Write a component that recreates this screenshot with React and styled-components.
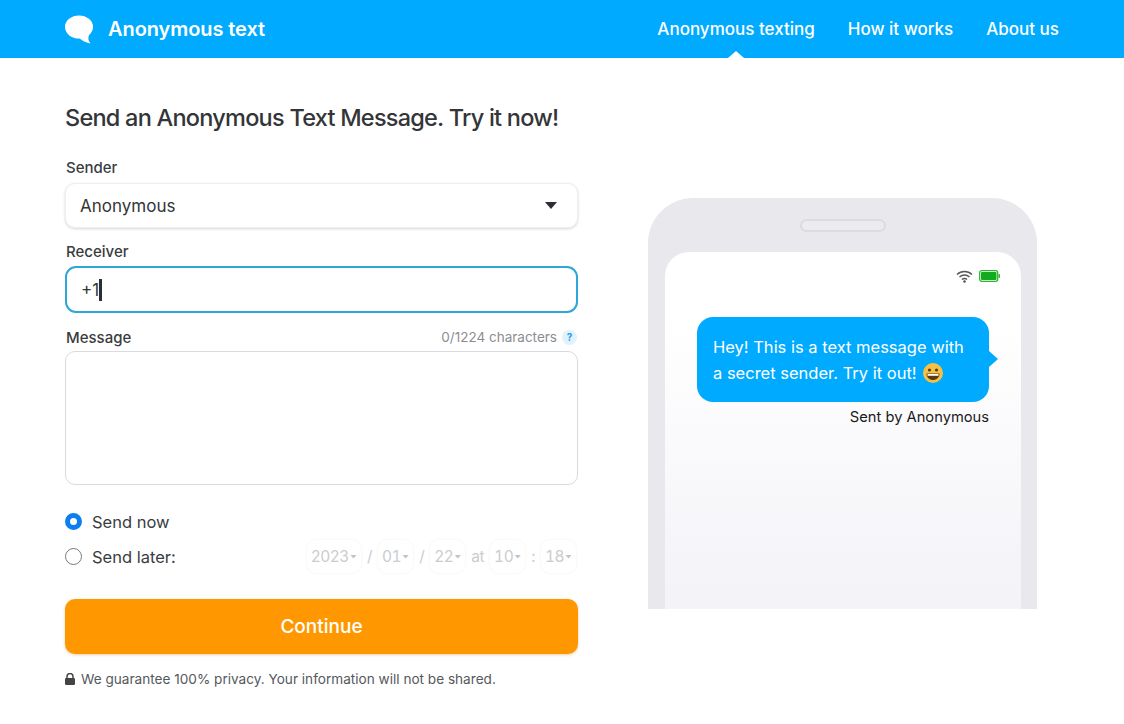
import React from 'react'
import styled, { createGlobalStyle } from 'styled-components'

const GlobalStyle = createGlobalStyle`
  html, body { margin: 0; padding: 0; background: #fff; }
  body { font-family: Inter, "Liberation Sans", sans-serif; color: #333538; height: 724px; overflow: hidden; }
`;
const Header = styled.header`
  height: 58px;
  background: #00aaff;
  display: flex;
  align-items: center;
  justify-content: space-between;
  padding: 0 65px;
`;
const Brand = styled.div`
  display: flex;
  align-items: center;
  gap: 14px;
  color: #fff;
  font-size: 20px;
  font-weight: 600;
  letter-spacing: -0.08px;
`;
const Nav = styled.nav`
  display: flex;
  gap: 33px;
`;
const NavLink = styled.a`
  position: relative;
  height: 58px;
  line-height: 58px;
  color: #fff;
  font-size: 17px;
  font-weight: 500;
  ${props => props.$active && `
    &:after {
      content: "";
      position: absolute;
      left: 50%;
      bottom: 0;
      margin-left: -8px;
      border-left: 8px solid transparent;
      border-right: 8px solid transparent;
      border-bottom: 7px solid #fff;
    }
  `}
`;
const Main = styled.main`
  display: flex;
  padding: 0 65px;
  gap: 70px;
`;
const FormCol = styled.div`
  width: 513px;
  padding-top: 45px;
`;
const Title = styled.h1`
  margin: 0 0 25px;
  font-size: 23.5px;
  line-height: 30px;
  font-weight: 500;
  letter-spacing: -0.76px;
  white-space: nowrap;
  color: #333538;
`;
const LabelRow = styled.div`
  display: flex;
  align-items: center;
  justify-content: space-between;
  height: 18px;
  padding: 0 1px;
  margin-bottom: ${props => props.$mb}px;
`;
const Label = styled.label`
  font-size: 15px;
  font-weight: 500;
  color: #3a3c40;
`;
const Counter = styled.div`
  display: flex;
  align-items: center;
  gap: 5px;
  font-size: 13.5px;
  color: #8a8d92;
`;
const Help = styled.span`
  width: 15px;
  height: 15px;
  border-radius: 50%;
  background: #dff2fd;
  color: #2f9be0;
  font-size: 10px;
  font-weight: 700;
  display: flex;
  align-items: center;
  justify-content: center;
`;
const Field = styled.div`
  box-sizing: border-box;
  height: ${props => props.$h}px;
  margin-bottom: ${props => props.$mb}px;
  display: flex;
  align-items: center;
  justify-content: space-between;
  padding: 0 20px 0 14px;
  background: #fff;
  border: 1px solid #eeeff0;
  border-radius: 10px;
  font-size: 17px;
  color: #333538;
  ${props => props.$raised && 'box-shadow: 0 1px 3px rgba(0,0,0,0.16);'}
  ${props => props.$focus && 'border: 2px solid #2ea6d8; padding-left: 14px; border-radius: 11px;'}
  ${props => props.$area && 'border-color: #d9dadd;'}
`;
const Caret = styled.span`
  display: inline-block;
  width: 3px;
  height: 22px;
  background: #2c2e33;
  vertical-align: middle;
`;
const InputText = styled.div`
  display: flex;
  align-items: center;
`;
const Arrow = styled.span`
  width: ${props => props.$w}px;
  height: ${props => props.$h}px;
  background: ${props => props.$c};
  clip-path: polygon(0 0, 100% 0, 50% 100%);
`;
const RadioRow = styled.div`
  display: flex;
  align-items: center;
  height: 35px;
`;
const Radio = styled.span`
  box-sizing: border-box;
  width: 17px;
  height: 17px;
  border-radius: 50%;
  margin-right: 10px;
  background: #fff;
  border: ${props => props.$on ? '5px solid #0d7df2' : '1.5px solid #77797d'};
`;
const RadioText = styled.span`
  font-size: 16.5px;
  color: #3a3c40;
`;
const DateRow = styled.div`
  margin-left: auto;
  display: flex;
  align-items: center;
  gap: 5px;
  padding-right: 1px;
  font-size: 15.5px;
  letter-spacing: -0.5px;
  font-feature-settings: "tnum";
  color: #cbccce;
`;
const DateBox = styled.span`
  box-sizing: border-box;
  height: 35px;
  padding: 0 4px;
  display: flex;
  align-items: center;
  gap: 1px;
  border-radius: 10px;
  border: 1px solid #fafafa;
  box-shadow: 0 0 2px rgba(0,0,0,0.03);
`;
const Continue = styled.button`
  display: block;
  width: 100%;
  height: 55px;
  margin-top: 25px;
  border: none;
  border-radius: 10px;
  background: #ff9800;
  box-shadow: 0 1px 3px rgba(200,120,0,0.35);
  color: #fff;
  font-family: inherit;
  font-size: 19px;
  font-weight: 500;
`;
const Privacy = styled.div`
  display: flex;
  align-items: center;
  gap: 6px;
  margin-top: 17px;
  font-size: 13.6px;
  color: #55585c;
`;
const PhoneCol = styled.div`
  padding-top: 140px;
`;
const Phone = styled.div`
  box-sizing: border-box;
  width: 389px;
  height: 411px;
  background: #e9e9ed;
  border-radius: 45px 45px 0 0;
  padding: 0 16px 0 17px;
  display: flex;
  flex-direction: column;
`;
const SpeakerWrap = styled.div`
  height: 54px;
  display: flex;
  justify-content: center;
  padding-top: 21px;
  box-sizing: border-box;
`;
const Speaker = styled.div`
  box-sizing: border-box;
  width: 86px;
  height: 13px;
  border: 2px solid #dbdbe0;
  border-radius: 7px;
  background: #ececf0;
`;
const Screen = styled.div`
  flex: 1;
  background: linear-gradient(#ffffff 18%, #f3f3f8 100%);
  border-radius: 24px 24px 0 0;
  padding: 0 21px 0 32px;
`;
const StatusBar = styled.div`
  height: 65px;
  padding-top: 17px;
  box-sizing: border-box;
  display: flex;
  justify-content: flex-end;
  align-items: flex-start;
  gap: 6px;
`;
const MessageWrap = styled.div`
  width: 292px;
`;
const Bubble = styled.div`
  position: relative;
  box-sizing: border-box;
  height: 85px;
  padding: 17px 16px;
  background: #00aaff;
  border-radius: 16px;
  color: #fff;
  font-size: 16.5px;
  line-height: 26px;
  white-space: nowrap;
  &:after {
    content: "";
    position: absolute;
    right: -9px;
    top: 34px;
    border-top: 8px solid transparent;
    border-bottom: 8px solid transparent;
    border-left: 9px solid #00aaff;
  }
`;
const Emoji = styled.svg`
  vertical-align: -4px;
  margin-left: 2px;
`;
const SentBy = styled.div`
  margin-top: 6px;
  text-align: right;
  font-size: 14.7px;
  color: #1a1a1a;
`;

const dateParts = [
  { type: 'box', value: '2023' },
  { type: 'sep', value: '/' },
  { type: 'box', value: '01' },
  { type: 'sep', value: '/' },
  { type: 'box', value: '22' },
  { type: 'sep', value: 'at' },
  { type: 'box', value: '10' },
  { type: 'sep', value: ':' },
  { type: 'box', value: '18' },
];

const App = () => {
  return (
    <>
      <GlobalStyle />
      <Header>
        <Brand>
          <svg width="29" height="30" viewBox="0 0 29 30">
            <ellipse cx="14" cy="13" rx="14" ry="11.500" fill="#fff" />
            <path d="M13 23 Q18 28 25.500 29.500 Q21.500 26 25 18 Z" fill="#fff" />
          </svg>
          Anonymous text
        </Brand>
        <Nav>
          <NavLink $active>Anonymous texting</NavLink>
          <NavLink>How it works</NavLink>
          <NavLink>About us</NavLink>
        </Nav>
      </Header>
      <Main>
        <FormCol>
          <Title>Send an Anonymous Text Message. Try it now!</Title>
          <LabelRow $mb={7}><Label>Sender</Label></LabelRow>
          <Field $h={45} $mb={14} $raised>
            Anonymous
            <Arrow $w={12} $h={7} $c="#2c2e33" />
          </Field>
          <LabelRow $mb={6}><Label>Receiver</Label></LabelRow>
          <Field $h={47} $mb={15} $focus>
            <InputText>+1<Caret /></InputText>
          </Field>
          <LabelRow $mb={5}>
            <Label>Message</Label>
            <Counter>0/1224 characters <Help>?</Help></Counter>
          </LabelRow>
          <Field $h={134} $mb={19} $area />
          <RadioRow>
            <Radio $on />
            <RadioText>Send now</RadioText>
          </RadioRow>
          <RadioRow>
            <Radio />
            <RadioText>Send later:</RadioText>
            <DateRow>
              {dateParts.map((part, i) => part.type === 'box'
                ? <DateBox key={i}>{part.value}<Arrow $w={7} $h={4} $c="#c2c3c5" /></DateBox>
                : <span key={i}>{part.value}</span>)}
            </DateRow>
          </RadioRow>
          <Continue>Continue</Continue>
          <Privacy>
            <svg width="10" height="12" viewBox="0 0 10 12">
              <path d="M2 5V3.500a3 3 0 0 1 6 0V5" fill="none" stroke="#444" strokeWidth="1.500" />
              <rect x="0" y="5" width="10" height="7" rx="1.200" fill="#444" />
            </svg>
            We guarantee 100% privacy. Your information will not be shared.
          </Privacy>
        </FormCol>
        <PhoneCol>
          <Phone>
            <SpeakerWrap><Speaker /></SpeakerWrap>
            <Screen>
              <StatusBar>
                <svg width="17" height="14" viewBox="0 0 17 14">
                  <path d="M1 5.500a11 11 0 0 1 15 0M3.500 8a7.500 7.500 0 0 1 10 0M6 10.500a3.500 3.500 0 0 1 5 0" fill="none" stroke="#55575b" strokeWidth="1.500" />
                  <circle cx="8.500" cy="12.500" r="1.300" fill="#55575b" />
                </svg>
                <svg width="21" height="12" viewBox="0 0 21 12" style={{ marginTop: 1 }}>
                  <rect x="0.700" y="0.700" width="18" height="10.600" rx="2" fill="none" stroke="#2fb52f" strokeWidth="1.300" />
                  <rect x="2" y="2" width="15.500" height="8" rx="1" fill="#12ab1f" />
                  <rect x="19.500" y="4" width="1.500" height="4" rx="0.700" fill="#2fb52f" />
                </svg>
              </StatusBar>
              <MessageWrap>
                <Bubble>
                  Hey! This is a text message with<br />
                  a secret sender. Try it out!{' '}
                  <Emoji width="20" height="20" viewBox="0 0 20 20">
                    <circle cx="10" cy="10" r="10" fill="#f6c142" />
                    <circle cx="6.500" cy="7" r="1.600" fill="#5a3a12" />
                    <circle cx="13.500" cy="7" r="1.600" fill="#5a3a12" />
                    <path d="M3.500 10.500h13c0 4-3 6.500-6.500 6.500s-6.500-2.500-6.500-6.500z" fill="#5a3a12" />
                    <path d="M4.500 11h11v1.800h-11z" fill="#fff" />
                  </Emoji>
                </Bubble>
                <SentBy>Sent by Anonymous</SentBy>
              </MessageWrap>
            </Screen>
          </Phone>
        </PhoneCol>
      </Main>
    </>
  )
}
export default App;
